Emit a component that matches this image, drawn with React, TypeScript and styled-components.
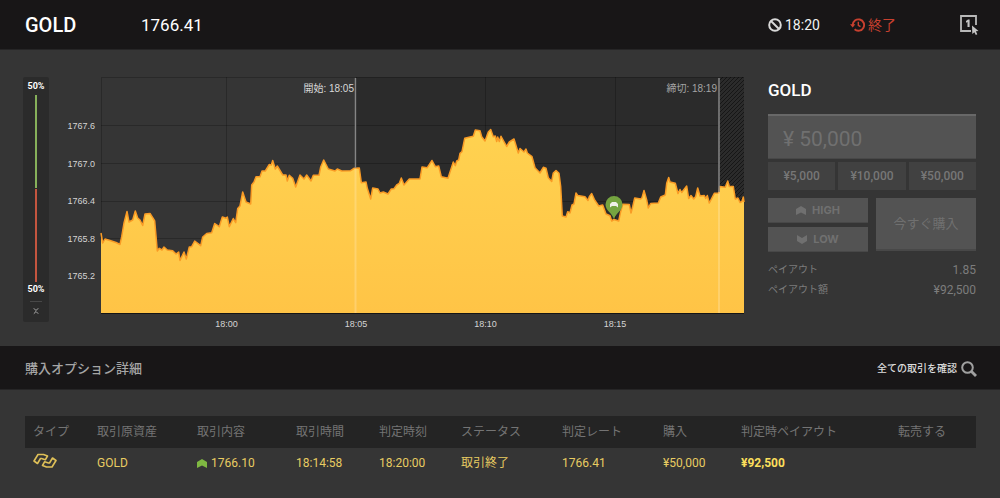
import React from "react";
import styled, { createGlobalStyle } from "styled-components";

const roboto = `Roboto, "Noto Sans CJK JP", sans-serif`;
const arial = `"Liberation Sans", "Noto Sans CJK JP", sans-serif`;

const GlobalStyle = createGlobalStyle`
  *, *::before, *::after { box-sizing: border-box; }
  body { margin: 0; background: #353535; color: #fff; font-family: ${roboto}; }
  button, input { font-family: inherit; margin: 0; border: 0; border-radius: 0; }
  h1, h2, p, dl, dd { margin: 0; }
`;

const TopBar = styled.header`
  display: flex;
  align-items: center;
  height: 50px;
  padding: 0 21px 0 25px;
  background: #181617;
  border-bottom: 1px solid #262526;
`;

const AssetName = styled.h1`
  width: 116px;
  font-size: 20px;
  line-height: 24px;
  font-weight: 500;
`;

const Rate = styled.span`
  flex: 1;
  font-size: 17px;
  line-height: 24px;
`;

const Status = styled.span<{ $tone: string; $width: number }>`
  display: flex;
  align-items: center;
  gap: 3px;
  width: ${(p) => p.$width}px;
  color: ${(p) => p.$tone};
  font-size: 14px;
  line-height: 20px;
`;

const IconButton = styled.button`
  display: flex;
  padding: 0;
  background: none;
  cursor: pointer;
`;

const Trading = styled.main`
  display: flex;
  align-items: flex-start;
  padding: 27px 24px 14px 23px;
`;

const Sentiment = styled.aside`
  display: flex;
  flex-direction: column;
  align-items: center;
  width: 26px;
  padding: 4px 0 2px;
  background: #2b2b2b;
  border-radius: 2px;
  font-size: 9px;
  line-height: 11px;
  font-weight: 700;
`;

const Bar = styled.div<{ $colour: string }>`
  width: 2px;
  height: 93px;
  background: ${(p) => p.$colour};
`;

const Bars = styled.div`
  display: grid;
  gap: 1px;
  margin: 3px 0 2px;
`;

const CollapseButton = styled.button`
  display: flex;
  justify-content: center;
  width: 12px;
  margin-top: 6px;
  padding: 5px 0;
  background: none;
  border-top: 1px solid #484848;
  cursor: pointer;
`;

const ChartBox = styled.div`
  flex: 1;
  min-width: 0;
  margin-right: 20px;
  svg { display: block; width: 100%; height: auto; }
`;

const Order = styled.form`
  width: 208px;
`;

const OrderTitle = styled.h2`
  padding-top: 1px;
  margin-bottom: 12px;
  font-size: 17px;
  line-height: 24px;
  font-weight: 500;
`;

const Amount = styled.input`
  display: block;
  width: 100%;
  height: 45px;
  padding: 4px 15px 0;
  background: #535353;
  border-top: 2px solid #686868;
  border-bottom: 1px solid #484848;
  color: #707070;
  font-size: 21px;
`;

const Presets = styled.div`
  display: grid;
  grid-template-columns: repeat(3, 1fr);
  gap: 3px;
  margin: 3px 0 8px;
`;

const Preset = styled.button`
  height: 28px;
  padding: 0;
  background: #414141;
  color: #777;
  font-size: 12px;
  font-weight: 500;
`;

const Actions = styled.div`
  display: grid;
  grid-template-columns: 1fr 1fr;
  gap: 4px 8px;
`;

const Direction = styled.button`
  display: flex;
  align-items: center;
  justify-content: center;
  gap: 6px;
  height: 25px;
  padding: 0;
  background: #535353;
  border-bottom: 1px solid #484848;
  color: #707070;
  font-family: Inter, sans-serif;
  font-size: 11px;
  font-weight: 700;
`;

const Buy = styled.button`
  grid-column: 2;
  grid-row: 1 / 3;
  height: 53px;
  padding: 0 0 3px;
  background: #535353;
  border-bottom: 2px solid #484848;
  color: #707070;
  font-size: 13px;
`;

const Payouts = styled.dl`
  margin-top: 8px;
  color: #7c7c7c;
  font-size: 12px;
  line-height: 20px;
`;

const PayoutLine = styled.div`
  display: flex;
  justify-content: space-between;
  dt { font-size: 10px; }
`;

const SectionBar = styled.header`
  display: flex;
  align-items: center;
  justify-content: space-between;
  height: 44px;
  padding: 2px 23px 0 25px;
  background: #181617;
  border-bottom: 1px solid #262526;
  h2 { font-size: 13px; line-height: 20px; font-weight: 500; color: #a5a5a5; }
`;

const AllTrades = styled.a`
  display: flex;
  align-items: center;
  gap: 4px;
  color: #ddd;
  font-size: 10px;
  line-height: 16px;
  font-weight: 500;
  text-decoration: none;
`;

const TableWrap = styled.section`
  padding: 26px 24px 20px 25px;
`;

const Table = styled.table`
  width: 100%;
  table-layout: fixed;
  border-collapse: collapse;
  font-size: 12px;
  line-height: 16px;
  text-align: left;
  th, td { padding: 0 0 0 8px; white-space: nowrap; }
  th { height: 32px; background: #242424; color: #747474; font-weight: 400; }
  td { height: 30px; color: #e8cc62; }
`;

const TradeRate = styled.span`
  display: flex;
  align-items: center;
  gap: 4px;
`;

const Return = styled.strong`
  color: #fbdf5c;
  font-weight: 700;
`;

const series: [number, number][] = [
  [101, 233], [102.7, 243], [105, 239], [110, 240.5], [116, 242.5], [120, 244.5], [121.7, 236.7], [124, 223],
  [127, 211.5], [129, 222], [132.7, 220], [135.3, 211], [137.7, 218], [140, 220], [142.7, 225.5], [145, 214],
  [150, 213.5], [152.7, 217.7], [154.7, 221], [157.3, 251], [159.3, 248.3], [162, 250], [164, 247], [167.3, 250],
  [172.7, 250.7], [176, 254], [178.7, 252], [180, 260.5], [184, 252], [186.3, 259], [189.3, 247], [191.7, 246.7],
  [194.7, 241], [200.7, 245.7], [202.7, 237], [206.7, 233.5], [211.7, 232.7], [214.7, 223.5], [219.3, 226.7],
  [222.3, 217], [226, 218.3], [227.3, 217], [229.3, 226.7], [233.3, 218.5], [235.7, 222.7], [237.7, 208.5],
  [240, 206], [242.7, 192], [246, 202], [250.7, 204], [251.7, 185], [254, 182], [256, 176.7], [260, 176.7],
  [262, 171], [265.3, 171], [269.3, 164.5], [271.3, 165], [272.7, 160.5], [275.3, 169], [277.3, 166], [282.7, 175],
  [286, 175], [287.3, 181], [289.3, 175.3], [292.7, 178.3], [295.7, 187], [300, 175], [304, 179], [306.7, 175],
  [311, 181], [313.3, 175.3], [319, 175.3], [320.7, 167], [323.7, 160], [328.3, 169], [335, 171], [337.3, 169],
  [341.7, 171], [350.7, 170.7], [354, 168.3], [359.3, 168], [361.3, 182.7], [366, 182], [367.3, 188.3], [370.7, 199],
  [372.7, 188], [378, 189], [380, 193], [383.3, 192], [388, 194], [391.3, 189], [394, 188.7], [396.7, 185],
  [399.3, 183.3], [401.3, 178], [404, 185], [409.3, 179], [420, 179], [422, 167], [427.3, 167.7], [432, 160.5],
  [435.3, 166.7], [438.7, 166], [441.3, 176.7], [448, 178.3], [453.3, 162], [455.3, 165.7], [456.7, 161],
  [458.7, 160], [460, 153.3], [462, 151.7], [464.7, 138.3], [473.3, 136.3], [475.3, 130], [480, 130.7],
  [481.7, 136.7], [485, 141], [488.3, 132], [490.7, 129.5], [493.3, 136.7], [495.3, 136], [496.7, 141.5],
  [497.7, 137], [499.3, 141.5], [501, 136.3], [506.7, 146.5], [509.3, 142], [514, 139], [518.3, 153], [520, 148.5],
  [524, 152], [526, 149], [527.3, 153], [532, 156.7], [535, 167.7], [540, 173], [543.3, 167.3], [546, 168.3],
  [548.3, 177.7], [551.7, 181.5], [553.3, 173], [556, 170.5], [559, 173.3], [560.7, 186.7], [562.3, 216],
  [566, 217], [567.7, 211.7], [570, 213], [572, 205], [574, 204], [576, 193], [577.7, 195.5], [585, 196.7],
  [588, 200.5], [589.3, 196.7], [591.7, 193.5], [594.3, 199.3], [598.7, 206], [602.7, 205], [606, 214],
  [610, 215.7], [611.7, 221], [614, 219.5], [618.7, 221], [620.7, 211.7], [622.7, 204.3], [629.3, 204.5],
  [631, 213], [632.7, 206.7], [634.7, 198], [640.7, 199], [642, 197.7], [644, 190.5], [646.7, 200], [648.3, 208],
  [650.7, 203.5], [658.3, 203], [660.7, 197], [665.3, 195], [666.7, 183.3], [668.7, 177.5], [670, 182],
  [675.3, 183.3], [678, 193.5], [680, 189.5], [681.7, 192.5], [686.7, 186], [688.7, 198.5], [691, 195.5],
  [693.7, 199], [695.7, 196.5], [697.7, 188], [700, 196], [704.3, 195.5], [705.7, 198.5], [707.3, 195.5],
  [709.3, 203], [714.3, 193.3], [718.7, 193], [719.7, 186.5], [725.3, 187.3], [727.7, 181], [729.3, 186.5],
  [733.3, 186.5], [735.3, 199], [738, 198], [740, 202.5], [742, 201.5], [743.3, 197], [744, 202],
];

const line = series.map(([x, y]) => `${x},${y}`).join(" ");

const rateTicks = [
  { y: 125.5, label: "1767.6" },
  { y: 163.5, label: "1767.0" },
  { y: 201, label: "1766.4" },
  { y: 238.5, label: "1765.8" },
  { y: 276, label: "1765.2" },
];

const timeTicks = [
  { x: 226.5, label: "18:00" },
  { x: 356, label: "18:05" },
  { x: 485.5, label: "18:10" },
  { x: 615, label: "18:15" },
];

function PriceChart() {
  return (
    <ChartBox>
      <svg viewBox="49 77 699 255" role="img" aria-label="GOLD" fontFamily={arial}>
        <defs>
          <linearGradient id="area" x1="0" y1="129" x2="0" y2="313" gradientUnits="userSpaceOnUse">
            <stop offset="0" stopColor="#ffd250" />
            <stop offset="1" stopColor="#ffc446" />
          </linearGradient>
          <pattern id="hatch" width="4" height="4" patternUnits="userSpaceOnUse">
            <rect width="4" height="4" fill="#2b2b2b" />
            <path d="M-1 1L1 -1M0 4L4 0M3 5L5 3" stroke="#161616" strokeWidth="1" />
          </pattern>
        </defs>
        <rect x="356" y="77" width="363" height="236" fill="#2b2b2b" />
        <rect x="719" y="77" width="25" height="236" fill="url(#hatch)" />
        <g stroke="#000" strokeOpacity=".22" fill="none">
          <path d="M101.5 313V77.5H744" />
          {rateTicks.map((t) => <path key={t.label} d={`M101 ${Math.floor(t.y)}.5H719`} />)}
          {timeTicks.map((t) => <path key={t.label} d={`M${Math.floor(t.x)}.5 77V313`} />)}
        </g>
        <polygon points={`101,313 ${line} 744,313`} fill="url(#area)" />
        <polyline points={line} fill="none" stroke="#f99b25" strokeWidth="1.5" strokeLinejoin="round" />
        <path d="M101 313.5H744" stroke="#151515" />
        <path d="M355.5 78V168M719 78V192" stroke="#858585" strokeWidth="1.5" />
        <path d="M355.5 168V313M719 192V313" stroke="#fff" strokeOpacity=".2" strokeWidth="2" />
        <g fontSize="10" textAnchor="end">
          <text x="354" y="92" fill="#d8d8d8">開始: 18:05</text>
          <text x="717" y="92" fill="#a4a4a4">締切: 18:19</text>
        </g>
        <g fontSize="9" fill="#d4d4d4">
          {rateTicks.map((t) => <text key={t.label} x="95" y={t.y + 3} textAnchor="end">{t.label}</text>)}
          {timeTicks.map((t) => <text key={t.label} x={t.x} y="327" textAnchor="middle">{t.label}</text>)}
        </g>
        <path d="M614 219C612 213 605.5 210.500 605.500 204.500A8.500 8.500 0 0 1 622.500 204.500C622.500 210.500 616 213 614 219Z" fill="#75a440" />
        <path d="M610 207.500V204L612 202H616L618 204V207.500L616 206H612Z" fill="#f0f0e8" />
      </svg>
    </ChartBox>
  );
}

function Chevron({ down = false, colour }: { down?: boolean; colour: string }) {
  return (
    <svg width="10" height="9" viewBox="0 0 10 9" aria-hidden="true">
      <path d={down ? "M0 0L5 3L10 0V6L5 9L0 6Z" : "M0 3L5 0L10 3V9L5 6.500L0 9Z"} fill={colour} />
    </svg>
  );
}

const columns = [
  { label: "タイプ", width: 64 },
  { label: "取引原資産", width: 100 },
  { label: "取引内容", width: 99 },
  { label: "取引時間", width: 83 },
  { label: "判定時刻", width: 82 },
  { label: "ステータス", width: 101 },
  { label: "判定レート", width: 101 },
  { label: "購入", width: 78 },
  { label: "判定時ペイアウト", width: 157 },
  { label: "転売する", width: 86 },
];

export default function App() {
  return (
    <>
      <GlobalStyle />
      <TopBar>
        <AssetName>GOLD</AssetName>
        <Rate>1766.41</Rate>
        <Status $tone="#f2f2f2" $width={82}>
          <svg width="14" height="14" viewBox="0 0 14 14" fill="none" stroke="#d8d8d8" strokeWidth="2" aria-hidden="true">
            <circle cx="7" cy="7" r="5.800" />
            <path d="M3 3L11 11" />
          </svg>
          18:20
        </Status>
        <Status $tone="#c8402f" $width={110}>
          <svg width="15" height="14" viewBox="0 0 15 14" fill="none" stroke="#c8402f" strokeWidth="1.900" aria-hidden="true">
            <path d="M2.700 7A5.700 5.700 0 1 1 4.600 11.300" />
            <path d="M8.300 3.800V7.300L10.500 8.700" strokeWidth="1.400" />
            <path d="M0 6.300H5.400L2.700 9.600Z" fill="#c8402f" stroke="none" />
          </svg>
          終了
        </Status>
        <IconButton type="button" aria-label="ワンクリック">
          <svg width="19" height="20" viewBox="0 0 19 20" aria-hidden="true">
            <path d="M11 16H1V1H16V10" fill="none" stroke="#b8b8b8" strokeWidth="1.800" />
            <path d="M6 6L8 4.500H9.600V12H7.500V7L6 7.800Z" fill="#c4c4c4" />
            <path d="M12 10.500L18.500 16L15.900 16.300L17.300 19.300L15.800 20L14.400 17.200L12.300 18.900Z" fill="#c4c4c4" />
          </svg>
        </IconButton>
      </TopBar>

      <Trading>
        <Sentiment>
          <span>50%</span>
          <Bars>
            <Bar $colour="#86b05a" />
            <Bar $colour="#c4553f" />
          </Bars>
          <span>50%</span>
          <CollapseButton type="button" aria-label="閉じる">
            <svg width="6" height="8" viewBox="0 0 6 8" fill="none" stroke="#b0b0b0" aria-hidden="true">
              <path d="M.8 1.300L3 3.500L5.200 1.300M.8 6.700L3 4.500L5.200 6.700" />
            </svg>
          </CollapseButton>
        </Sentiment>
        <PriceChart />
        <Order onSubmit={(e) => e.preventDefault()}>
          <OrderTitle>GOLD</OrderTitle>
          <Amount aria-label="購入金額" defaultValue="¥ 50,000" />
          <Presets>
            <Preset type="button">¥5,000</Preset>
            <Preset type="button">¥10,000</Preset>
            <Preset type="button">¥50,000</Preset>
          </Presets>
          <Actions>
            <Direction type="button"><Chevron colour="#707070" />HIGH</Direction>
            <Buy type="submit">今すぐ購入</Buy>
            <Direction type="button"><Chevron down colour="#707070" />LOW</Direction>
          </Actions>
          <Payouts>
            <PayoutLine><dt>ペイアウト</dt><dd>1.85</dd></PayoutLine>
            <PayoutLine><dt>ペイアウト額</dt><dd>¥92,500</dd></PayoutLine>
          </Payouts>
        </Order>
      </Trading>

      <SectionBar>
        <h2>購入オプション詳細</h2>
        <AllTrades href="#trades">
          全ての取引を確認
          <svg width="16" height="16" viewBox="0 0 16 16" fill="none" stroke="#a0a0a0" aria-hidden="true">
            <circle cx="6.500" cy="6.500" r="5.300" strokeWidth="2" />
            <path d="M10.500 10.500L15 15" strokeWidth="2.800" />
          </svg>
        </AllTrades>
      </SectionBar>

      <TableWrap id="trades">
        <Table>
          <colgroup>
            {columns.map((c) => <col key={c.label} width={c.width} />)}
          </colgroup>
          <thead>
            <tr>{columns.map((c) => <th key={c.label} scope="col">{c.label}</th>)}</tr>
          </thead>
          <tbody>
            <tr>
              <td>
                <svg width="24" height="16" viewBox="0 0 24 16" fill="none" stroke="#dfc058" strokeWidth="1.600" strokeLinejoin="round" aria-hidden="true">
                  <path d="M1 8L5 1.500H10.500L14.500 3L12.300 6.800L8.500 5.500H7.500L4.500 10.500Z" />
                  <path d="M23 7.500L19 14H13.500L9.500 12.500L11.700 8.700L15.500 10H16.500L19.500 5Z" />
                </svg>
              </td>
              <td>GOLD</td>
              <td><TradeRate><Chevron colour="#7fb842" />1766.10</TradeRate></td>
              <td>18:14:58</td>
              <td>18:20:00</td>
              <td>取引終了</td>
              <td>1766.41</td>
              <td>¥50,000</td>
              <td><Return>¥92,500</Return></td>
              <td />
            </tr>
          </tbody>
        </Table>
      </TableWrap>
    </>
  );
}
